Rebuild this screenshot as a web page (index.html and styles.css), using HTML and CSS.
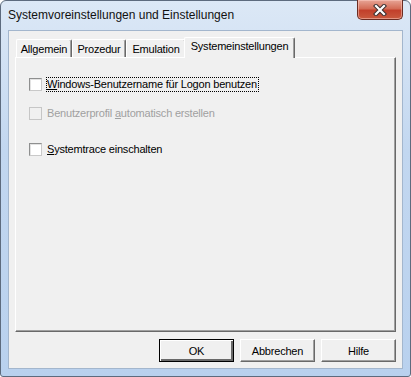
FILE: index.html
```html
<!DOCTYPE html>
<html lang="de">
<head>
    <meta charset="UTF-8">
    <title>Systemvoreinstellungen und Einstellungen</title>
    <link rel="stylesheet" href="styles.css">
</head>
<body>
    <div class="window">
        <div class="titlebar">
            <span class="title">Systemvoreinstellungen und Einstellungen</span>
            <div class="close">
                <svg width="14" height="12" viewBox="0 0 14 12">
                    <path d="M3 2 L11 10 M11 2 L3 10" stroke="#3a3030" stroke-width="4.2" stroke-linecap="square" fill="none"/>
                    <path d="M3 2 L11 10 M11 2 L3 10" stroke="#ffffff" stroke-width="2.2" stroke-linecap="square" fill="none"/>
                </svg>
            </div>
        </div>

        <div class="client">
            <div class="tabs">
                <div class="tab tab-general">Allgemein</div>
                <div class="tab tab-proc">Prozedur</div>
                <div class="tab tab-emu">Emulation</div>
                <div class="tab tab-system active">Systemeinstellungen</div>
            </div>

            <div class="panel">
                <div class="option first">
                    <span class="box"></span>
                    <span class="label focused"><u>W</u>indows-Benutzername für Logon benutzen</span>
                </div>
                <div class="option disabled">
                    <span class="box"></span>
                    <span class="label">Benutzerprofil <u>a</u>utomatisch erstellen</span>
                </div>
                <div class="option last">
                    <span class="box"></span>
                    <span class="label"><u>S</u>ystemtrace einschalten</span>
                </div>
            </div>

            <div class="buttons">
                <button class="btn default">OK</button>
                <button class="btn">Abbrechen</button>
                <button class="btn">Hilfe</button>
            </div>
        </div>
    </div>
</body>
</html>
```

FILE: styles.css
```css
* {
    box-sizing: border-box;
}

body {
    margin: 0;
    padding: 0;
    background: #ffffff;
    font-family: "Liberation Sans", Arial, sans-serif;
}

.window {
    width: 411px;
    height: 377px;
    border: 1px solid #5d6b7e;
    border-radius: 6px 6px 3px 3px;
    padding: 0 7px 7px;
    background: linear-gradient(#dce8f6, #c2d7f0 40%, #b9d1ee);
    display: flex;
    flex-direction: column;
}

.titlebar {
    height: 29px;
    display: flex;
    justify-content: space-between;
    align-items: flex-start;
}

.title {
    margin-top: 6px;
    font-size: 12px;
    line-height: 16px;
    color: #111;
}

.close {
    width: 46px;
    height: 20px;
    margin-top: -1px;
    border: 1px solid #6b2c22;
    border-top: none;
    border-radius: 0 0 5px 5px;
    background: linear-gradient(#e7a596, #d46d57 45%, #c2402b 55%, #c95a3e);
    box-shadow: inset 0 0 0 1px rgba(255, 210, 200, 0.5);
    display: flex;
    align-items: center;
    justify-content: center;
}

.close svg {
    display: block;
}

.client {
    flex: 1;
    background: #f0f0f0;
    border: 1px solid #a3b6cd;
    padding: 6px 6px 6px;
    display: flex;
    flex-direction: column;
    font-size: 11px;
    letter-spacing: -0.2px;
}

.tabs {
    height: 20px;
    display: flex;
    align-items: flex-end;
    padding-left: 1px;
    position: relative;
    z-index: 1;
}

.tab {
    height: 18px;
    padding-top: 2px;
    line-height: 15px;
    text-align: center;
    color: #000;
    border-top: 1px solid #fff;
    border-left: 1px solid #fff;
    border-right: 1px solid #696969;
    border-radius: 2px 2px 0 0;
    box-shadow: inset -1px 0 0 #a0a0a0;
    white-space: nowrap;
}

.tab-general { width: 56px; }
.tab-proc { width: 54px; }
.tab-emu { width: 60px; }
.tab-system { width: 111px; }

.tab.active {
    height: 21px;
    margin: 0 -2px -1px -2px;
    padding-top: 1px;
    background: #f0f0f0;
}

.panel {
    height: 275px;
    border-top: 1px solid #fff;
    border-left: 1px solid #fff;
    border-right: 1px solid #696969;
    border-bottom: 1px solid #696969;
    box-shadow: inset -1px -1px 0 #a0a0a0;
    padding: 19px 0 0 13px;
}

.option {
    height: 15px;
    display: flex;
    align-items: center;
    margin-bottom: 14px;
}

.option.disabled {
    margin-bottom: 21px;
    color: #a0a0a0;
}

.box {
    width: 13px;
    height: 13px;
    background: #fff;
    border: 1px solid #8e8f8f;
    border-right-color: #c9c9c9;
    border-bottom-color: #c9c9c9;
    box-shadow: inset 1px 1px 0 #e3e3e3;
}

.option.disabled .box {
    background: #f0f0f0;
    border-color: #c6c6c6;
    box-shadow: none;
}

.label {
    margin-left: 4px;
    height: 15px;
    line-height: 13px;
    padding: 0 1px 0 0;
    border: 1px solid transparent;
    white-space: nowrap;
}

.label.focused {
    border: 1px dotted #000;
}

.buttons {
    margin-top: 7px;
    display: flex;
    justify-content: flex-end;
    gap: 6px;
}

.btn {
    width: 75px;
    height: 23px;
    padding: 0;
    font-family: "Liberation Sans", Arial, sans-serif;
    font-size: 11px;
    letter-spacing: -0.2px;
    color: #000;
    background: #f0f0f0;
    border-top: 1px solid #fff;
    border-left: 1px solid #fff;
    border-right: 1px solid #696969;
    border-bottom: 1px solid #696969;
    box-shadow: inset -1px -1px 0 #a0a0a0;
}

.btn.default {
    border: 1px solid #000;
    box-shadow: inset 1px 1px 0 #fff, inset -2px -2px 0 #696969, inset -1px -1px 0 #a0a0a0;
}
```
